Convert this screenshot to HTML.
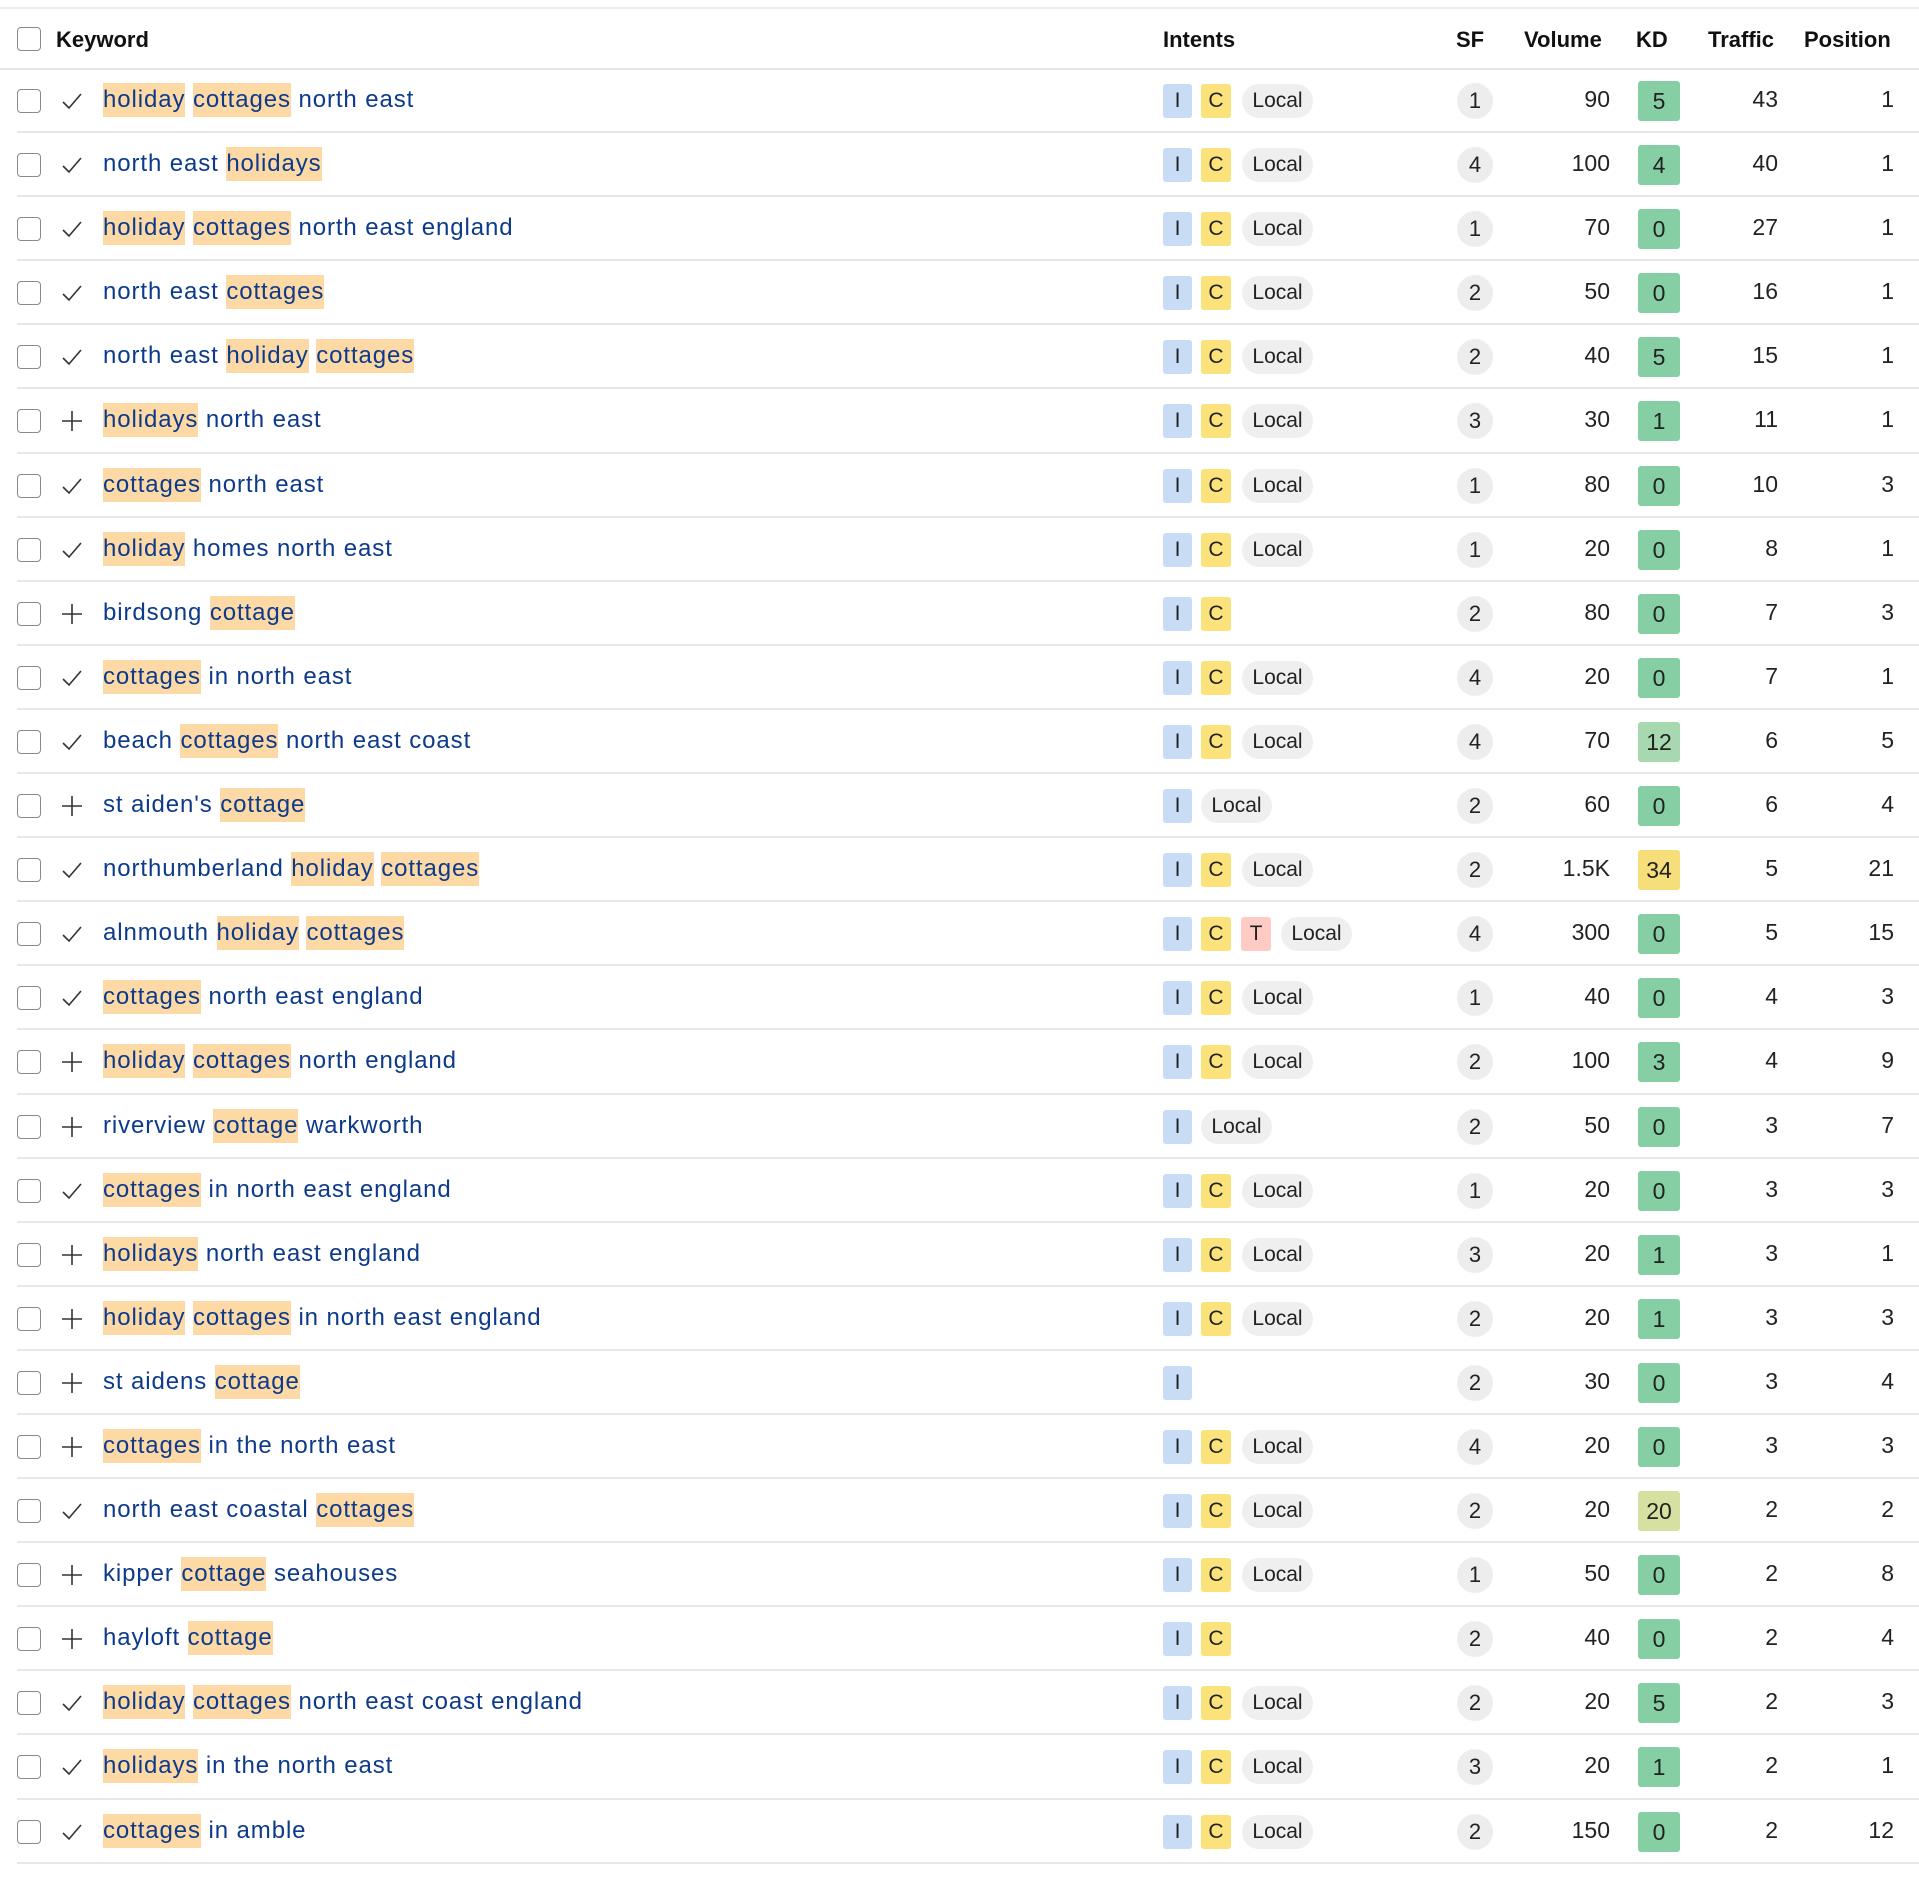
<!DOCTYPE html>
<html><head><meta charset="utf-8"><style>
*{margin:0;padding:0;box-sizing:border-box}
body{width:1919px;height:1877px;background:#fff;font-family:"Liberation Sans",sans-serif;position:relative;overflow:hidden}
.top{position:absolute;left:0;right:0;top:7px;height:2px;background:#ececec}
.hd{position:absolute;left:0;right:0;top:9px;height:61px;border-bottom:2px solid #e6e6e6;font-weight:bold;font-size:22px;color:#111}
.hd span{position:absolute;top:18px}
.rows{position:absolute;left:0;right:0;top:69px}
.r{position:relative;height:64.1px;margin-left:17px;border-bottom:2px solid #e8e8e8}
.cb{position:absolute;left:0;top:20px;width:24px;height:24px;border:1.5px solid #8a8a8a;border-radius:4px;background:#fff}
.hd .cb{left:17px;top:18px}
.ic{position:absolute;left:44px;top:21px;width:22px;height:22px}
.kw{position:absolute;left:86px;top:14px;font-size:24px;line-height:34px;color:#0d3a8a;white-space:nowrap;letter-spacing:0.9px}
.kw i{font-style:normal;background:#fdd9a6;display:inline-block;line-height:34px}
.b{position:absolute;top:15px;height:34px;font-size:21px;line-height:34px;text-align:center;color:#222;border-radius:3px}
.I{left:1146px;width:29px;background:#c9dcf6}
.C{left:1184px;width:30px;background:#fbe27b}
.T{left:1224px;width:30px;background:#fdcbc4}
.L{width:71px;background:#efefef;border-radius:17px;left:1225px}
.L2{left:1184px}.L3{left:1264px}
.sf{position:absolute;left:1440px;top:14px;width:36px;height:36px;border-radius:50%;background:#ededed;font-size:22px;line-height:36px;text-align:center;color:#222}
.n{position:absolute;top:13px;font-size:23px;line-height:34px;color:#222;text-align:right;width:100px}
.v{left:1493px}.t{left:1661px}.p{left:1777px}
.kd{position:absolute;left:1621px;top:12px;width:42px;height:40px;border-radius:3px;font-size:23px;line-height:40px;text-align:center;color:#222;background:#86cfa4}
.k12{background:#a8d8b0}.k34{background:#f6df7a}.k20{background:#d6e0a0}
</style></head><body>
<svg width="0" height="0" style="position:absolute"><defs>
<symbol id="ck" viewBox="0 0 22 22"><path d="M2 12 L8 18 L20 4" fill="none" stroke="#333" stroke-width="1.6"/></symbol>
<symbol id="pl" viewBox="0 0 22 22"><path d="M11 1 V21 M1 11 H21" fill="none" stroke="#333" stroke-width="1.6"/></symbol>
</defs></svg>
<div class="top"></div>
<div class="hd"><div class="cb"></div><span style="left:56px">Keyword</span><span style="left:1163px">Intents</span><span style="left:1456px">SF</span><span style="left:1524px">Volume</span><span style="left:1636px">KD</span><span style="left:1708px">Traffic</span><span style="left:1804px">Position</span></div>
<div class="rows">
<div class="r"><div class="cb"></div><svg class="ic"><use href="#ck"/></svg><div class="kw"><i>holiday</i> <i>cottages</i> north east</div><div class="b I">I</div><div class="b C">C</div><div class="b L">Local</div><div class="sf">1</div><div class="n v">90</div><div class="kd">5</div><div class="n t">43</div><div class="n p">1</div></div>
<div class="r"><div class="cb"></div><svg class="ic"><use href="#ck"/></svg><div class="kw">north east <i>holidays</i></div><div class="b I">I</div><div class="b C">C</div><div class="b L">Local</div><div class="sf">4</div><div class="n v">100</div><div class="kd">4</div><div class="n t">40</div><div class="n p">1</div></div>
<div class="r"><div class="cb"></div><svg class="ic"><use href="#ck"/></svg><div class="kw"><i>holiday</i> <i>cottages</i> north east england</div><div class="b I">I</div><div class="b C">C</div><div class="b L">Local</div><div class="sf">1</div><div class="n v">70</div><div class="kd">0</div><div class="n t">27</div><div class="n p">1</div></div>
<div class="r"><div class="cb"></div><svg class="ic"><use href="#ck"/></svg><div class="kw">north east <i>cottages</i></div><div class="b I">I</div><div class="b C">C</div><div class="b L">Local</div><div class="sf">2</div><div class="n v">50</div><div class="kd">0</div><div class="n t">16</div><div class="n p">1</div></div>
<div class="r"><div class="cb"></div><svg class="ic"><use href="#ck"/></svg><div class="kw">north east <i>holiday</i> <i>cottages</i></div><div class="b I">I</div><div class="b C">C</div><div class="b L">Local</div><div class="sf">2</div><div class="n v">40</div><div class="kd">5</div><div class="n t">15</div><div class="n p">1</div></div>
<div class="r"><div class="cb"></div><svg class="ic"><use href="#pl"/></svg><div class="kw"><i>holidays</i> north east</div><div class="b I">I</div><div class="b C">C</div><div class="b L">Local</div><div class="sf">3</div><div class="n v">30</div><div class="kd">1</div><div class="n t">11</div><div class="n p">1</div></div>
<div class="r"><div class="cb"></div><svg class="ic"><use href="#ck"/></svg><div class="kw"><i>cottages</i> north east</div><div class="b I">I</div><div class="b C">C</div><div class="b L">Local</div><div class="sf">1</div><div class="n v">80</div><div class="kd">0</div><div class="n t">10</div><div class="n p">3</div></div>
<div class="r"><div class="cb"></div><svg class="ic"><use href="#ck"/></svg><div class="kw"><i>holiday</i> homes north east</div><div class="b I">I</div><div class="b C">C</div><div class="b L">Local</div><div class="sf">1</div><div class="n v">20</div><div class="kd">0</div><div class="n t">8</div><div class="n p">1</div></div>
<div class="r"><div class="cb"></div><svg class="ic"><use href="#pl"/></svg><div class="kw">birdsong <i>cottage</i></div><div class="b I">I</div><div class="b C">C</div><div class="sf">2</div><div class="n v">80</div><div class="kd">0</div><div class="n t">7</div><div class="n p">3</div></div>
<div class="r"><div class="cb"></div><svg class="ic"><use href="#ck"/></svg><div class="kw"><i>cottages</i> in north east</div><div class="b I">I</div><div class="b C">C</div><div class="b L">Local</div><div class="sf">4</div><div class="n v">20</div><div class="kd">0</div><div class="n t">7</div><div class="n p">1</div></div>
<div class="r"><div class="cb"></div><svg class="ic"><use href="#ck"/></svg><div class="kw">beach <i>cottages</i> north east coast</div><div class="b I">I</div><div class="b C">C</div><div class="b L">Local</div><div class="sf">4</div><div class="n v">70</div><div class="kd k12">12</div><div class="n t">6</div><div class="n p">5</div></div>
<div class="r"><div class="cb"></div><svg class="ic"><use href="#pl"/></svg><div class="kw">st aiden's <i>cottage</i></div><div class="b I">I</div><div class="b L L2">Local</div><div class="sf">2</div><div class="n v">60</div><div class="kd">0</div><div class="n t">6</div><div class="n p">4</div></div>
<div class="r"><div class="cb"></div><svg class="ic"><use href="#ck"/></svg><div class="kw">northumberland <i>holiday</i> <i>cottages</i></div><div class="b I">I</div><div class="b C">C</div><div class="b L">Local</div><div class="sf">2</div><div class="n v">1.5K</div><div class="kd k34">34</div><div class="n t">5</div><div class="n p">21</div></div>
<div class="r"><div class="cb"></div><svg class="ic"><use href="#ck"/></svg><div class="kw">alnmouth <i>holiday</i> <i>cottages</i></div><div class="b I">I</div><div class="b C">C</div><div class="b T">T</div><div class="b L L3">Local</div><div class="sf">4</div><div class="n v">300</div><div class="kd">0</div><div class="n t">5</div><div class="n p">15</div></div>
<div class="r"><div class="cb"></div><svg class="ic"><use href="#ck"/></svg><div class="kw"><i>cottages</i> north east england</div><div class="b I">I</div><div class="b C">C</div><div class="b L">Local</div><div class="sf">1</div><div class="n v">40</div><div class="kd">0</div><div class="n t">4</div><div class="n p">3</div></div>
<div class="r"><div class="cb"></div><svg class="ic"><use href="#pl"/></svg><div class="kw"><i>holiday</i> <i>cottages</i> north england</div><div class="b I">I</div><div class="b C">C</div><div class="b L">Local</div><div class="sf">2</div><div class="n v">100</div><div class="kd">3</div><div class="n t">4</div><div class="n p">9</div></div>
<div class="r"><div class="cb"></div><svg class="ic"><use href="#pl"/></svg><div class="kw">riverview <i>cottage</i> warkworth</div><div class="b I">I</div><div class="b L L2">Local</div><div class="sf">2</div><div class="n v">50</div><div class="kd">0</div><div class="n t">3</div><div class="n p">7</div></div>
<div class="r"><div class="cb"></div><svg class="ic"><use href="#ck"/></svg><div class="kw"><i>cottages</i> in north east england</div><div class="b I">I</div><div class="b C">C</div><div class="b L">Local</div><div class="sf">1</div><div class="n v">20</div><div class="kd">0</div><div class="n t">3</div><div class="n p">3</div></div>
<div class="r"><div class="cb"></div><svg class="ic"><use href="#pl"/></svg><div class="kw"><i>holidays</i> north east england</div><div class="b I">I</div><div class="b C">C</div><div class="b L">Local</div><div class="sf">3</div><div class="n v">20</div><div class="kd">1</div><div class="n t">3</div><div class="n p">1</div></div>
<div class="r"><div class="cb"></div><svg class="ic"><use href="#pl"/></svg><div class="kw"><i>holiday</i> <i>cottages</i> in north east england</div><div class="b I">I</div><div class="b C">C</div><div class="b L">Local</div><div class="sf">2</div><div class="n v">20</div><div class="kd">1</div><div class="n t">3</div><div class="n p">3</div></div>
<div class="r"><div class="cb"></div><svg class="ic"><use href="#pl"/></svg><div class="kw">st aidens <i>cottage</i></div><div class="b I">I</div><div class="sf">2</div><div class="n v">30</div><div class="kd">0</div><div class="n t">3</div><div class="n p">4</div></div>
<div class="r"><div class="cb"></div><svg class="ic"><use href="#pl"/></svg><div class="kw"><i>cottages</i> in the north east</div><div class="b I">I</div><div class="b C">C</div><div class="b L">Local</div><div class="sf">4</div><div class="n v">20</div><div class="kd">0</div><div class="n t">3</div><div class="n p">3</div></div>
<div class="r"><div class="cb"></div><svg class="ic"><use href="#ck"/></svg><div class="kw">north east coastal <i>cottages</i></div><div class="b I">I</div><div class="b C">C</div><div class="b L">Local</div><div class="sf">2</div><div class="n v">20</div><div class="kd k20">20</div><div class="n t">2</div><div class="n p">2</div></div>
<div class="r"><div class="cb"></div><svg class="ic"><use href="#pl"/></svg><div class="kw">kipper <i>cottage</i> seahouses</div><div class="b I">I</div><div class="b C">C</div><div class="b L">Local</div><div class="sf">1</div><div class="n v">50</div><div class="kd">0</div><div class="n t">2</div><div class="n p">8</div></div>
<div class="r"><div class="cb"></div><svg class="ic"><use href="#pl"/></svg><div class="kw">hayloft <i>cottage</i></div><div class="b I">I</div><div class="b C">C</div><div class="sf">2</div><div class="n v">40</div><div class="kd">0</div><div class="n t">2</div><div class="n p">4</div></div>
<div class="r"><div class="cb"></div><svg class="ic"><use href="#ck"/></svg><div class="kw"><i>holiday</i> <i>cottages</i> north east coast england</div><div class="b I">I</div><div class="b C">C</div><div class="b L">Local</div><div class="sf">2</div><div class="n v">20</div><div class="kd">5</div><div class="n t">2</div><div class="n p">3</div></div>
<div class="r"><div class="cb"></div><svg class="ic"><use href="#ck"/></svg><div class="kw"><i>holidays</i> in the north east</div><div class="b I">I</div><div class="b C">C</div><div class="b L">Local</div><div class="sf">3</div><div class="n v">20</div><div class="kd">1</div><div class="n t">2</div><div class="n p">1</div></div>
<div class="r"><div class="cb"></div><svg class="ic"><use href="#ck"/></svg><div class="kw"><i>cottages</i> in amble</div><div class="b I">I</div><div class="b C">C</div><div class="b L">Local</div><div class="sf">2</div><div class="n v">150</div><div class="kd">0</div><div class="n t">2</div><div class="n p">12</div></div>
</div>
</body></html>
